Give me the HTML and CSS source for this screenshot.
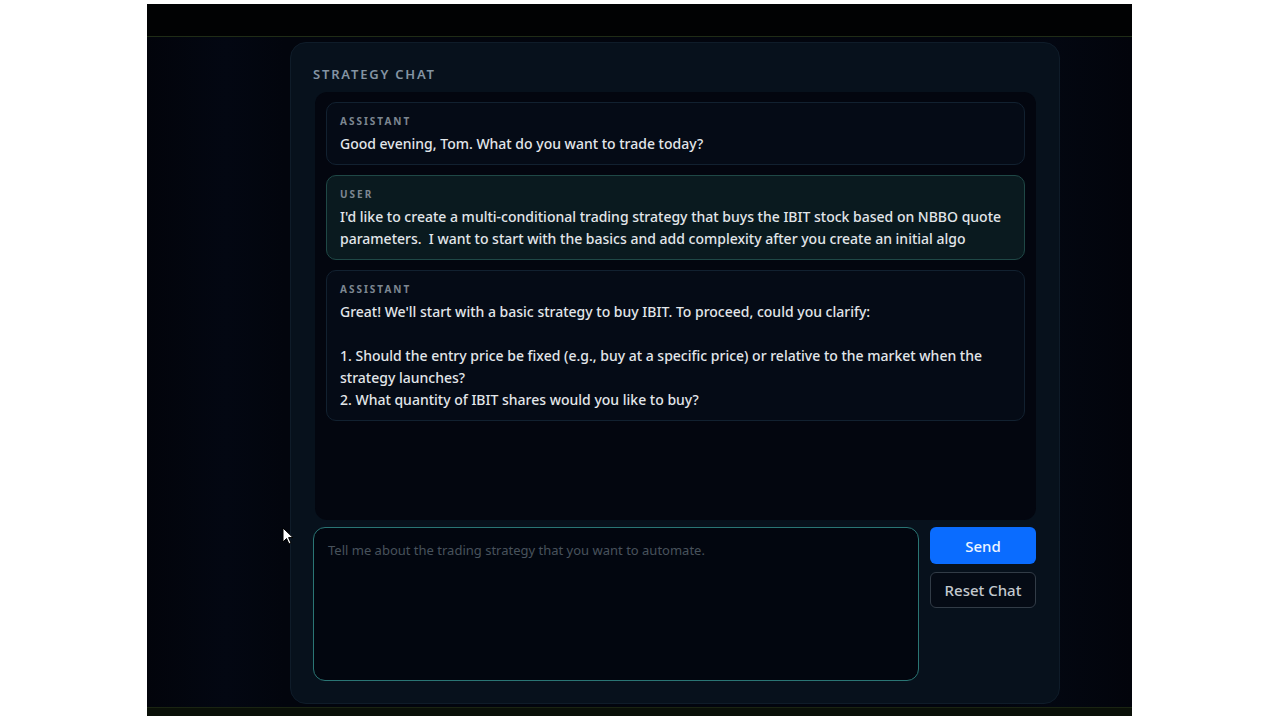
FILE: index.html
```html
<!DOCTYPE html>
<html lang="en">
<head>
    <meta charset="UTF-8">
    <meta name="viewport" content="width=device-width, initial-scale=1.0">
    <title>Strategy Chat</title>
    <link rel="stylesheet" href="styles.css">
</head>
<body>
    <div class="screen">
        <div class="topbar"></div>

        <main class="stage">
            <section class="chat-panel">
                <h2 class="panel-title">STRATEGY CHAT</h2>

                <div class="messages">
                    <div class="msg">
                        <div class="msg-role">ASSISTANT</div>
                        <div class="msg-text">Good evening, Tom. What do you want to trade today?</div>
                    </div>
                    <div class="msg msg-user">
                        <div class="msg-role">USER</div>
                        <div class="msg-text">I'd like to create a multi-conditional trading strategy that buys the IBIT stock based on NBBO quote parameters.&nbsp; I want to start with the basics and add complexity after you create an initial algo</div>
                    </div>
                    <div class="msg">
                        <div class="msg-role">ASSISTANT</div>
                        <div class="msg-text">Great! We'll start with a basic strategy to buy IBIT. To proceed, could you clarify:<br><br>1. Should the entry price be fixed (e.g., buy at a specific price) or relative to the market when the strategy launches?<br>2. What quantity of IBIT shares would you like to buy?</div>
                    </div>
                </div>

                <div class="composer">
                    <textarea class="prompt" placeholder="Tell me about the trading strategy that you want to automate." autofocus></textarea>
                    <div class="actions">
                        <button class="btn-send">Send</button>
                        <button class="btn-reset">Reset Chat</button>
                    </div>
                </div>
            </section>

            <!-- mouse pointer -->
            <svg class="pointer" width="12" height="18" viewBox="0 0 12 18">
                <path d="M1 1 L1 15 L4.5 11.5 L7 17 L9 16 L6.6 10.6 L11 10.6 Z" fill="#fff" stroke="#000" stroke-width="1"/>
            </svg>
        </main>

        <div class="bottombar"></div>
    </div>
</body>
</html>
```

FILE: styles.css
```css
body {
    margin: 0;
    background-color: #fff;
    font-family: "Noto Sans", Arial, sans-serif;
}
.screen {
    margin: 4px 0 0 147px;
    width: 985px;
    height: 712px;
    display: flex;
    flex-direction: column;
    background-color: #02050d;
}
.topbar {
    height: 32px;
    background-color: #010203;
    border-bottom: 1px solid #1f2c16;
}
.bottombar {
    height: 8px;
    background-color: #0a1008;
    border-top: 1px solid #1a2412;
}
.stage {
    position: relative;
    flex: 1;
    padding-top: 5px;
    background: linear-gradient(90deg, #02040b 0%, #030712 8%, #02050d 14%, #02050e 86%, #030711 92%, #02040b 100%);
}
.chat-panel {
    box-sizing: border-box;
    margin-left: 143px;
    width: 770px;
    height: 662px;
    padding: 22px 23px 22px 22px;
    background-color: #07111c;
    border: 1px solid #0f1c29;
    border-radius: 16px;
    display: flex;
    flex-direction: column;
}
.panel-title {
    margin: 0 0 9px 0;
    font-size: 13px;
    font-weight: 600;
    letter-spacing: 1.8px;
    color: #8494a3;
    line-height: 18px;
}
.messages {
    box-sizing: border-box;
    margin-left: 2px;
    height: 428px;
    padding: 10px 11px;
    background-color: #03060f;
    border-radius: 12px;
    display: flex;
    flex-direction: column;
    gap: 10px;
}
.msg {
    padding: 12px 13px 9px;
    background-color: #050b16;
    border: 1px solid #122130;
    border-radius: 10px;
}
.msg-user {
    background-color: #0a1a1f;
    border-color: #1f4846;
}
.msg-role {
    font-size: 10px;
    font-weight: 700;
    letter-spacing: 2px;
    line-height: 12px;
    color: #7d8791;
    margin-bottom: 6px;
}
.msg-text {
    font-size: 14px;
    font-weight: 500;
    line-height: 22px;
    color: #e2e6ea;
}
.composer {
    margin-top: 7px;
    display: flex;
    gap: 11px;
}
.prompt {
    box-sizing: border-box;
    width: 607px;
    height: 154px;
    padding: 13px 14px;
    background-color: #02060f;
    border: 1.5px solid #2a7574;
    border-radius: 12px;
    color: #dde2e6;
    font-family: "Noto Sans", Arial, sans-serif;
    font-size: 13px;
    resize: none;
    outline: none;
    caret-color: #9aa4ad;
}
.prompt::placeholder {
    color: #48525c;
}
.actions {
    display: flex;
    flex-direction: column;
    gap: 8px;
}
.btn-send {
    width: 106px;
    height: 37px;
    background-color: #0a6cff;
    color: #eef5ff;
    border: none;
    border-radius: 6px;
    font-family: "Noto Sans", Arial, sans-serif;
    font-size: 15px;
    font-weight: 500;
    cursor: pointer;
}
.btn-reset {
    width: 106px;
    height: 36px;
    background-color: #050b15;
    color: #c3c9cf;
    border: 1px solid #323c47;
    border-radius: 6px;
    font-family: "Noto Sans", Arial, sans-serif;
    font-size: 15px;
    font-weight: 500;
    cursor: pointer;
}
.pointer {
    position: absolute;
    left: 135px;
    top: 490px;
}
```
